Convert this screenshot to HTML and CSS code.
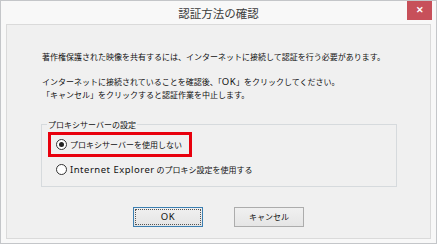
FILE: index.html
```html
<!DOCTYPE html>
<html lang="ja">
<head>
    <meta charset="UTF-8">
    <meta name="viewport" content="width=device-width, initial-scale=1.0">
    <title>認証方法の確認</title>
    <link rel="stylesheet" href="styles.css">
</head>
<body>

<div class="window">
    <div class="titlebar">
        <div></div>
        <div class="title">認証方法の確認</div>
        <div class="close">&#x2715;</div>
    </div>
    <div class="panel">
        <p class="msg">著作権保護された映像を共有するには、インターネットに接続して認証を行う必要があります。</p>
        <p class="msg second">インターネットに接続されていることを確認後、「<span class="latin">OK</span>」をクリックしてください。<br>「キャンセル」をクリックすると認証作業を中止します。</p>

        <fieldset class="group">
            <legend>プロキシサーバーの設定</legend>
            <div class="option marked"><span class="radio checked"></span>プロキシサーバーを使用しない</div>
            <div class="option"><span class="radio"></span><span class="latin">Internet Explorer</span>&nbsp;のプロキシ設定を使用する</div>
        </fieldset>

        <div class="buttons">
            <div class="button default"><span class="latin">OK</span></div>
            <div class="button">キャンセル</div>
        </div>
    </div>
</div>

</body>
</html>
```

FILE: styles.css
```css
body {
    margin: 0;
    font-family: 'Noto Sans CJK JP', 'Noto Sans', sans-serif;
    background-color: #ffffff;
    color: #111111;
}
.window {
    width: 437px;
    height: 244px;
    box-sizing: border-box;
    border: 1px solid #c4c6c9;
    background: #f8f8f8;
    display: flex;
    flex-direction: column;
}
.titlebar {
    height: 23px;
    display: grid;
    grid-template-columns: 1fr auto 1fr;
    align-items: start;
}
.title {
    font-size: 11.5px;
    line-height: 23px;
    padding-top: 1px;
    color: #3c3c3c;
}
.close {
    justify-self: end;
    width: 25px;
    height: 19px;
    margin-right: 4px;
    background: #c7505a;
    color: #ffffff;
    font-size: 9px;
    font-weight: bold;
    line-height: 18px;
    text-align: center;
}
.panel {
    height: 215px;
    margin: 0 5px 0 5px;
    box-sizing: border-box;
    border: 1px solid #dadada;
    background: #f0f0f0;
    padding: 25px 0 0 35px;
}
.msg {
    margin: 0;
    font-size: 8px;
    line-height: 13px;
}
.msg.second {
    margin-top: 12px;
}
.latin {
    font-family: 'Noto Sans', 'Open Sans', sans-serif;
    font-size: 9.5px;
    letter-spacing: 0.5px;
}
.group {
    width: 356px;
    box-sizing: border-box;
    margin: 17px 0 0 -1px;
    padding: 1px 0 4px 6px;
    border: 1px solid #d6dadd;
}
.group legend {
    font-size: 8px;
    line-height: 13px;
    padding: 0 1px;
    margin-left: -1px;
}
.option {
    display: flex;
    align-items: center;
    width: fit-content;
    height: 19px;
    padding: 0 7px 0 5px;
    border: 3px solid transparent;
    font-size: 8px;
}
.option.marked {
    border-color: #e8000d;
}
.radio {
    width: 9px;
    height: 9px;
    margin-right: 3px;
    border: 1px solid #333333;
    border-radius: 50%;
    background: #ffffff;
    display: flex;
    align-items: center;
    justify-content: center;
}
.radio.checked::after {
    content: '';
    width: 5px;
    height: 5px;
    border-radius: 50%;
    background: #222222;
}
.buttons {
    display: flex;
    justify-content: center;
    gap: 31px;
    margin: 20px 0 0 -35px;
}
.button {
    width: 70px;
    height: 20px;
    box-sizing: border-box;
    border: 1px solid #acacac;
    background: linear-gradient(#f0f0f0, #e5e5e5);
    font-size: 8px;
    line-height: 18px;
    text-align: center;
}
.button.default {
    border-color: #3c7fb1;
    outline: 1px dotted #555555;
    outline-offset: -3px;
}
```
